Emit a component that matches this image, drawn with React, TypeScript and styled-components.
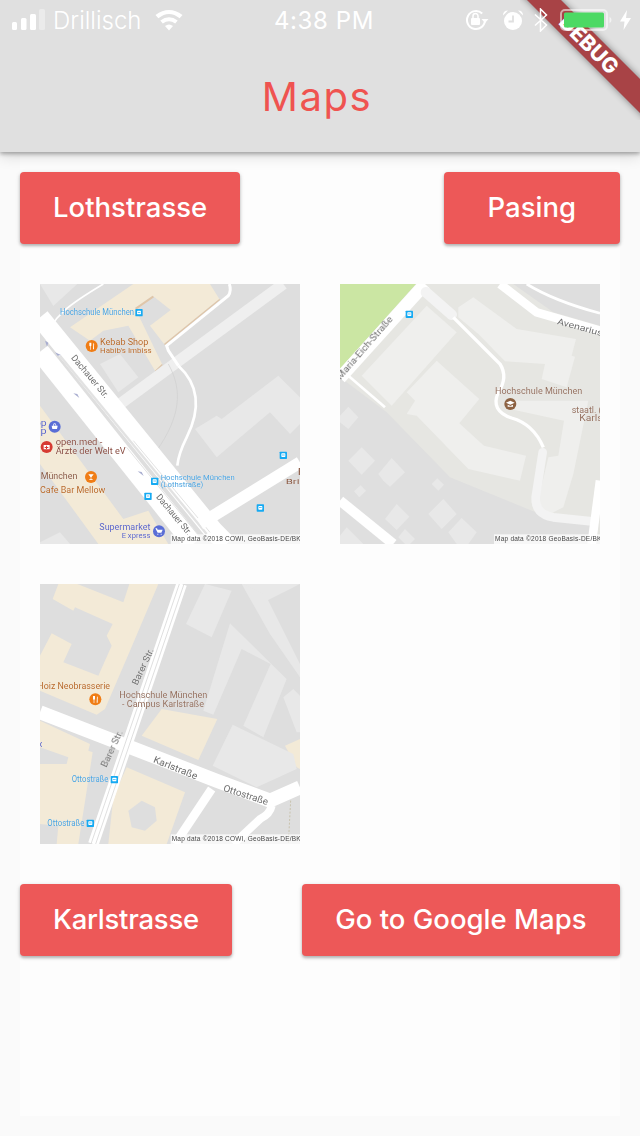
import React from "react";
import styled, { createGlobalStyle } from "styled-components";

const Global = createGlobalStyle`
  html, body { margin: 0; padding: 0; background: #fafafa; }
  body { font-family: Inter, "Noto Sans", sans-serif; }
  * { box-sizing: border-box; }
`;

const Page = styled.div`
  position: relative;
  width: 640px;
  height: 1136px;
  overflow: hidden;
  background: #fafafa;
  display: flex;
  flex-direction: column;
`;

const AppBar = styled.header`
  height: 152px;
  flex: none;
  background: #e0e0e0;
  box-shadow: 0 2px 4px rgba(0, 0, 0, 0.3), 0 4px 14px rgba(0, 0, 0, 0.14);
  display: flex;
  flex-direction: column;
  position: relative;
`;

const StatusBar = styled.div`
  height: 40px;
  display: grid;
  grid-template-columns: 1fr auto 1fr;
  align-items: center;
  color: #fff;
  position: relative;
  z-index: 4;
`;

const StatusLeft = styled.div`
  display: flex;
  align-items: center;
  padding-left: 12px;
`;

const Carrier = styled.span`
  font-size: 24px;
  font-weight: 300;
  margin-left: 8px;
`;

const Clock = styled.span`
  font-size: 24px;
  font-weight: 400;
  letter-spacing: 0.6px;
  margin-left: 8px;
`;

const StatusRight = styled.div`
  display: flex;
  align-items: center;
  justify-content: flex-end;
  padding-right: 9px;
`;

const Title = styled.h1`
  margin: 0;
  flex: 1;
  display: flex;
  align-items: center;
  justify-content: center;
  font-size: 40px;
  line-height: 48px;
  font-weight: 400;
  letter-spacing: 1.6px;
  color: #ef5350;
  padding-right: 6px;
  padding-top: 2px;
`;

const DebugCorner = styled.div`
  position: absolute;
  top: 0;
  right: 0;
  width: 120px;
  height: 120px;
  overflow: hidden;
  z-index: 3;
`;

const DebugBand = styled.div`
  position: absolute;
  left: -27px;
  top: 37px;
  width: 200px;
  height: 24px;
  padding-right: 12px;
  transform: rotate(45deg);
  background: #a84346;
  box-shadow: 0 0 7px rgba(0, 0, 0, 0.45);
  color: #fff;
  font-size: 21px;
  line-height: 24px;
  font-weight: 800;
  text-align: center;
  letter-spacing: 0.2px;
`;

const Content = styled.main`
  flex: none;
  margin: 0 20px;
  height: 964px;
  background: #fdfdfd;
  padding-top: 20px;
`;

const ButtonRow = styled.div`
  display: flex;
  justify-content: space-between;
`;

const ActionButton = styled.button<{ $pad?: number; $track?: number }>`
  height: 72px;
  padding: 0 ${(p) => p.$pad ?? 33}px 2px;
  border: none;
  border-radius: 4px;
  background: #ed5858;
  color: #fff;
  font-family: inherit;
  font-size: 27.5px;
  font-weight: 500;
  letter-spacing: ${(p) => p.$track ?? 0}px;
  box-shadow: 0 2px 3px rgba(0, 0, 0, 0.24), 0 1px 5px rgba(0, 0, 0, 0.12);
`;

const MapGrid = styled.div`
  display: grid;
  grid-template-columns: 300px 300px;
  grid-auto-rows: 300px;
  margin: 20px 0;
`;

const MapCell = styled.div`
  padding: 20px;
`;

const MapFrame = styled.svg`
  display: block;
  width: 260px;
  height: 260px;
`;

const F = "Roboto, Arial, sans-serif";
const BLUE = "#4aa3e0";
const BROWN = "#94705f";
const GREY = "#6f6f6f";
const ORANGE = "#f07d14";
const TAN = "#f3ead7";
const LIGHT = "#e8e8e8";

type LabelProps = {
  x: number;
  y: number;
  w: number;
  c: string;
  s?: number;
  r?: number;
  children: string;
};

const L = ({ x, y, w, c, s = 22, r, children }: LabelProps) => (
  <text
    x={x}
    y={y}
    fontFamily={F}
    fontSize={s * 1.14}
    fill={c}
    textLength={w}
    lengthAdjust="spacingAndGlyphs"
    transform={r ? `rotate(${r} ${x} ${y})` : undefined}
    stroke="#fff"
    strokeWidth={0.5}
    paintOrder="stroke"
  >
    {children}
  </text>
);

const Transit = ({ x, y }: { x: number; y: number }) => (
  <g>
    <rect x={x - 11} y={y - 11} width={22} height={22} rx={2} fill="#18aaf2" />
    <rect x={x - 6} y={y - 6} width={12} height={11} rx={2} fill="#fff" />
    <rect x={x - 4} y={y - 2} width={8} height={2} fill="#18aaf2" />
  </g>
);

const Pin = ({ x, y, c, kind }: { x: number; y: number; c: string; kind: "food" | "shop" | "med" | "edu" | "bar" | "cart" }) => (
  <g>
    <circle cx={x} cy={y} r={18} fill={c} />
    {kind === "food" && (
      <path d={`M${x - 7} ${y - 10}v8q0 3 2 3v10h2v-10q2 0 2-3v-8M${x + 5} ${y - 10}q4 4 2 10v10h-3z`} fill="#fff" />
    )}
    {kind === "bar" && <path d={`M${x - 8} ${y - 8}h16l-7 9v6h4v2h-10v-2h4v-6z`} fill="#fff" />}
    {kind === "shop" && <path d={`M${x - 9} ${y - 3}h18l-2 10h-14zM${x - 5} ${y - 3}q0-7 5-7t5 7h-2q0-5-3-5t-3 5z`} fill="#fff" />}
    {kind === "med" && <path d={`M${x - 9} ${y - 6}h18v13h-18zM${x - 2} ${y - 4}v4h-4v3h4v3h3v-3h4v-3h-4v-4z`} fill="#fff" fillRule="evenodd" />}
    {kind === "edu" && <path d={`M${x} ${y - 10}l13 6-13 6-13-6zM${x - 8} ${y + 2}l8 4 8-4v6h-16z`} fill="#fff" />}
    {kind === "cart" && <path d={`M${x - 11} ${y - 9}h5l2 4h15l-4 9h-11zM${x - 5} ${y + 7}h3v3h-3zM${x + 5} ${y + 7}h3v3h-3z`} fill="#fff" />}
  </g>
);

const Credit = ({ x, text }: { x: number; text: string }) => (
  <g>
    <rect x={x} y={751} width={780 - x} height={29} fill="#fff" fillOpacity={0.75} />
    <text x={x + 3} y={772} fontFamily="'Liberation Sans', Arial, sans-serif" fontSize={19.5} fill="#444" letterSpacing={0.7}>
      {text}
    </text>
  </g>
);

const Blur = ({ id }: { id: string }) => (
  <defs>
    <filter id={id} x="0" y="0" width="100%" height="100%">
      <feGaussianBlur stdDeviation="0.9" />
    </filter>
  </defs>
);

const LothMap = () => (
  <MapFrame viewBox="0 0 780 780">
    <Blur id="m1" />
    <g filter="url(#m1)">
      <rect width={780} height={780} fill="#dedede" />
      <polygon points="0,0 112,0 40,66" fill={LIGHT} />
      <path d="M90,130 L280,0 L510,0 L538,45 L372,180 L330,125 L392,78 L338,35 L285,72 L366,240 L345,260 L265,125 L190,140 L150,170Z" fill={TAN} />
      <path d="M285,72 L338,35 L342,40 L290,76Z M372,180 L538,45 L540,48 L375,183Z M345,260 L366,240 L368,243 L347,262Z" fill="#e0c6a8" />
      <polygon points="180,240 240,210 295,280 235,325" fill={LIGHT} />
      <polygon points="0,365 250,705 325,680 385,780 175,780 0,540" fill={TAN} />
      <polygon points="0,775 60,745 90,780 0,780" fill={LIGHT} />
      <polygon points="465,435 530,395 545,405 715,275 780,340 780,420 750,450 690,385 530,520" fill={LIGHT} />
      <path d="M240,360 L730,0" stroke="#efefef" strokeWidth={34} fill="none" />
      <path d="M415,245 L385,200 L380,185 L565,35 Q575,20 568,0" stroke="#fff" strokeWidth={9} fill="none" />
      <path d="M415,245 C475,300 485,370 440,460 Q415,510 412,545" stroke="#fff" strokeWidth={8} fill="none" />
      <path d="M20,170 C30,100 90,60 190,0" stroke="#fff" strokeWidth={5} fill="none" />
      <path d="M385,240 C430,320 420,400 350,500" stroke="#cfcfcf" strokeWidth={2} fill="none" />
      <path d="M0,100 L520,740 L560,780" stroke="#fff" strokeWidth={58} fill="none" />
      <path d="M0,203 L460,780" stroke="#fff" strokeWidth={58} fill="none" />
      <path d="M60,215 L500,750" stroke="#e2e2e2" strokeWidth={7} fill="none" />
      <path d="M280,470 L510,745 M260,490 L480,760" stroke="#c4c4c4" strokeWidth={1.5} fill="none" />
      <path d="M480,720 L780,535" stroke="#fff" strokeWidth={36} fill="none" />
      <path d="M100,328 l18,14 -6,-12 -12,-2z M293,562 l18,14 -6,-12 -12,-2z M45,205 l18,8 -10,2z M15,170 l6,18 4,-12z" fill="#a9aed0" />
      <L x={60} y={92} w={222} c={BLUE}>Hochschule München</L>
      <Transit x={297} y={86} />
      <Pin x={155} y={186} c={ORANGE} kind="food" />
      <L x={180} y={183} w={145} c="#b8692a" s={23}>Kebab Shop</L>
      <L x={180} y={206} w={155} c="#b8692a" s={20}>Habib's Imbiss</L>
      <L x={92} y={222} w={160} c={GREY} s={24} r={50}>Dachauer Str.</L>
      <L x={347} y={640} w={150} c={GREY} s={24} r={50}>Dachauer Str.</L>
      <L x={-15} y={425} w={35} c="#5a64c8" s={22}>pp</L>
      <L x={-15} y={449} w={35} c="#5a64c8" s={22}>sp</L>
      <Pin x={44} y={428} c="#5a6ed6" kind="shop" />
      <Pin x={20} y={489} c="#d63a32" kind="med" />
      <L x={47} y={484} w={140} c="#8a4f45" s={23}>open.med -</L>
      <L x={47} y={511} w={210} c="#8a4f45" s={23}>Ärzte der Welt eV</L>
      <L x={2} y={584} w={110} c="#8a5a45" s={23}>München</L>
      <Pin x={153} y={579} c={ORANGE} kind="bar" />
      <L x={0} y={626} w={196} c="#b8692a" s={23}>Cafe Bar Mellow</L>
      <L x={362} y={587} w={222} c={BLUE} s={20}>Hochschule München</L>
      <L x={362} y={610} w={128} c={BLUE} s={20}>(Lothstraße)</L>
      <Transit x={344} y={592} />
      <Transit x={324} y={637} />
      <Transit x={730} y={514} />
      <Transit x={661} y={672} />
      <L x={773} y={574} w={20} c="#8a5a45" s={22}>F</L>
      <L x={737} y={601} w={60} c="#8a5a45" s={20}>Brie</L>
      <L x={178} y={738} w={153} c="#5a64c8" s={24}>Supermarket</L>
      <L x={245} y={762} w={86} c="#5a64c8" s={21}>E xpress</L>
      <Pin x={357} y={742} c="#5a6ed6" kind="cart" />
      <Credit x={392} text="Map data ©2018 COWI, GeoBasis-DE/BKG" />
    </g>
  </MapFrame>
);

const PasingMap = () => (
  <MapFrame viewBox="0 0 780 780">
    <Blur id="m2" />
    <g filter="url(#m2)">
      <rect width={780} height={780} fill="#e6e6e2" />
      <polygon points="0,280 140,385 330,580 600,690 760,720 780,780 0,780" fill="#dfdfdf" />
      <polygon points="0,0 228,0 0,255" fill="#cbe6a3" />
      <polygon points="520,0 780,0 780,125 640,85" fill="#dedede" />
      <path d="M480,0 L590,85 L780,140" stroke="#fff" strokeWidth={26} fill="none" />
      <path d="M560,0 Q640,50 780,88" stroke="#fff" strokeWidth={8} fill="none" />
      <path d="M255,0 L0,282" stroke="#fff" strokeWidth={38} fill="none" />
      <path d="M25,275 L135,370" stroke="#fff" strokeWidth={8} fill="none" />
      <polygon points="65,275 260,65 350,145 155,365" fill="#efefed" />
      <polygon points="200,325 290,230 418,345 358,418 432,485 558,515 540,590 385,555 230,395 200,390 225,350" fill="#efefed" />
      <polygon points="355,70 400,40 530,135 708,165 695,215 705,218 680,310 605,285 615,240 495,232 415,150 355,100" fill="#efefed" />
      <polygon points="510,350 745,350 700,570 670,670 630,690 592,660 625,520 655,515 672,410 510,375" fill="#efefed" />
      <path d="M258,25 L335,92" stroke="#f3f3f3" strokeWidth={32} strokeLinecap="round" fill="none" />
      <path d="M340,100 L480,240 Q505,280 475,325 Q450,380 515,402 Q580,420 610,490" stroke="#fff" strokeWidth={10} fill="none" />
      <path d="M608,505 L587,640 Q585,690 640,700 L755,712" stroke="#f3f3f3" strokeWidth={26} strokeLinecap="round" fill="none" />
      <path d="M780,590 L755,780" stroke="#fff" strokeWidth={26} fill="none" />
      <path d="M0,650 L160,780" stroke="#fff" strokeWidth={30} fill="none" />
      {[
        "0,395 25,368 55,400 25,435 0,415",
        "25,530 65,490 105,530 65,572",
        "115,570 155,522 195,565 150,608 130,590",
        "42,622 62,604 78,620 58,640",
        "275,600 292,583 312,602 295,620",
        "135,705 170,660 208,698 170,738",
        "265,690 310,645 350,690 305,735",
        "325,745 365,702 410,745 385,780 350,780",
        "175,760 195,735 225,765 210,780 195,780",
        "0,755 20,730 70,780 0,780",
      ].map((p) => (
        <polygon key={p} points={p} fill={LIGHT} />
      ))}
      <L x={2} y={288} w={240} c={GREY} s={25} r={-49}>Maria-Eich-Straße</L>
      <Transit x={208} y={91} />
      <L x={650} y={120} w={140} c={GREY} s={23} r={15}>Avenarius</L>
      <L x={465} y={330} w={262} c={BROWN} s={22}>Hochschule München</L>
      <Pin x={511} y={360} c="#8d6242" kind="edu" />
      <L x={695} y={386} w={90} c={BROWN} s={22}>staatl. (</L>
      <L x={718} y={412} w={70} c={BROWN} s={22}>Karls</L>
      <Credit x={462} text="Map data ©2018 GeoBasis-DE/BKG" />
    </g>
  </MapFrame>
);

const KarlMap = () => (
  <MapFrame viewBox="0 0 780 780">
    <Blur id="m3" />
    <g filter="url(#m3)">
      <rect width={780} height={780} fill="#dedede" />
      <polygon points="38,45 55,0 355,0 268,205 195,375 170,392 0,320 0,215 35,148 95,180 70,235 175,275 215,185 200,155 218,120 105,70 100,80" fill={TAN} />
      <polygon points="112,0 250,55 268,0" fill="#dedede" />
      <polygon points="305,455 365,375 532,405 475,528" fill={TAN} />
      <polygon points="0,410 150,480 145,500 158,505 115,780 50,780 55,725 0,720 0,540 80,540 85,520 0,490" fill={TAN} />
      <polygon points="260,550 435,625 380,780 205,780 220,640" fill={TAN} />
      <polygon points="265,680 305,650 345,670 350,710 315,740 275,730" fill="#dedede" />
      <polygon points="735,485 780,465 780,555 770,550" fill={TAN} />
      <polygon points="438,120 495,0 575,20 515,160" fill={LIGHT} />
      <polygon points="490,380 570,118 740,285 670,460 610,425 692,240 605,195 520,392" fill={LIGHT} />
      <polygon points="518,545 578,422 760,510 770,555 650,610" fill={LIGHT} />
      <polygon points="605,0 660,0 780,240 780,280 690,150" fill={LIGHT} />
      <polygon points="610,0 780,0 680,50 670,30" fill={LIGHT} />
      <polygon points="730,340 760,315 780,335 780,445 770,445" fill={LIGHT} />
      <path d="M0,385 L530,590 L690,650 L780,610" stroke="#fff" strokeWidth={42} fill="none" strokeLinejoin="round" />
      <path d="M425,0 L160,780" stroke="#fff" strokeWidth={32} fill="none" />
      <path d="M418,0 L153,780 M432,0 L167,780" stroke="#cfcfcf" strokeWidth={2} fill="none" />
      <path d="M515,615 L405,780" stroke="#fff" strokeWidth={26} fill="none" />
      <path d="M695,665 Q690,690 660,705 L580,780" stroke="#fff" strokeWidth={24} fill="none" />
      <path d="M752,650 L745,780" stroke="#bdb494" strokeWidth={2} strokeDasharray="6 5" fill="none" />
      <L x={292} y={305} w={118} c={GREY} s={24} r={-65}>Barer Str.</L>
      <L x={200} y={552} w={118} c={GREY} s={24} r={-65}>Barer Str.</L>
      <L x={-8} y={316} w={218} c="#b8692a" s={23}>Hoiz Neobrasserie</L>
      <Pin x={166} y={346} c={ORANGE} kind="food" />
      <L x={238} y={342} w={264} c={BROWN} s={22}>Hochschule München</L>
      <L x={246} y={370} w={246} c={BROWN} s={22}>- Campus Karlstraße</L>
      <L x={338} y={534} w={140} c={GREY} s={25} r={22}>Karlstraße</L>
      <L x={548} y={620} w={140} c={GREY} s={25} r={18}>Ottostraße</L>
      <L x={-5} y={490} w={12} c="#5a64c8" s={22}>x</L>
      <L x={95} y={595} w={110} c={BLUE}>Ottostraße</L>
      <Transit x={223} y={587} />
      <L x={22} y={726} w={111} c={BLUE}>Ottostraße</L>
      <Transit x={151} y={718} />
      <Credit x={392} text="Map data ©2018 COWI, GeoBasis-DE/BKG" />
    </g>
  </MapFrame>
);

const SignalIcon = () => (
  <svg width="33" height="22" viewBox="0 0 33 22">
    <rect x="0" y="13" width="5" height="8" rx="1.5" fill="#fff" />
    <rect x="9" y="9" width="5.5" height="12" rx="1.5" fill="#fff" />
    <rect x="18" y="5" width="6" height="16" rx="1.5" fill="#fff" />
    <rect x="27" y="0" width="6" height="21" rx="1.5" fill="#fff" fillOpacity="0.35" />
  </svg>
);

const WifiIcon = () => (
  <svg width="28" height="21" viewBox="0 0 28 21" style={{ marginLeft: 14 }}>
    <path d="M14 20.5l-4-4.6q4-3 8 0zM7.8 13.4l-2.5-2.9q8.700-6.500 17.400 0l-2.5 2.9q-6.200-4.500-12.400 0zM3.400 8.300L.5 5.100q13.500-10 27 0l-2.900 3.200Q14-.2 3.400 8.300z" fill="#fff" />
  </svg>
);

const RotationIcon = () => (
  <svg width="24" height="22" viewBox="0 0 24 22">
    <path d="M20 11a9 9 0 1 1-2.800-6.500" fill="none" stroke="#fff" strokeWidth="2" />
    <path d="M16.500 10h7l-3.500 4z" fill="#fff" />
    <rect x="6" y="9" width="9" height="7" rx="1" fill="#fff" />
    <path d="M8 9V7a2.500 2.500 0 0 1 5 0v2" fill="none" stroke="#fff" strokeWidth="1.500" />
  </svg>
);

const AlarmIcon = () => (
  <svg width="22" height="22" viewBox="0 0 22 22" style={{ marginLeft: 13 }}>
    <circle cx="11" cy="12" r="9" fill="#fff" />
    <path d="M11 6.500V12.500H6.500" fill="none" stroke="#e0e0e0" strokeWidth="1.800" />
    <path d="M1 6.500Q1 1.500 6 1.500zM21 6.500Q21 1.500 16 1.500z" fill="#fff" />
  </svg>
);

const BluetoothIcon = () => (
  <svg width="14" height="24" viewBox="0 0 14 24" style={{ marginLeft: 10 }}>
    <path d="M1 6.500L12.500 17 6.500 23V1L12.500 7 1 17.500" fill="none" stroke="#fff" strokeWidth="1.500" />
  </svg>
);

const BatteryIcon = () => (
  <svg width="53" height="22" viewBox="0 0 53 22" style={{ marginLeft: 12 }}>
    <rect x="1" y="1" width="46" height="20" rx="4" fill="none" stroke="#fff" strokeOpacity="0.55" strokeWidth="2" />
    <rect x="4" y="3.500" width="40" height="15" rx="1.500" fill="#4cd964" />
    <path d="M49.500 8q2 .5 2 3t-2 3z" fill="#fff" fillOpacity="0.6" />
  </svg>
);

const BoltIcon = () => (
  <svg width="11" height="20" viewBox="0 0 11 20" style={{ marginLeft: 7 }}>
    <path d="M7 0L0 11.500H4.500L3.500 20 11 8H6z" fill="#fff" />
  </svg>
);

export default function App() {
  return (
    <Page>
      <Global />
      <AppBar>
        <StatusBar>
          <StatusLeft>
            <SignalIcon />
            <Carrier>Drillisch</Carrier>
            <WifiIcon />
          </StatusLeft>
          <Clock>4:38 PM</Clock>
          <StatusRight>
            <RotationIcon />
            <AlarmIcon />
            <BluetoothIcon />
            <BatteryIcon />
            <BoltIcon />
          </StatusRight>
        </StatusBar>
        <Title>Maps</Title>
      </AppBar>
      <DebugCorner>
        <DebugBand>DEBUG</DebugBand>
      </DebugCorner>
      <Content>
        <ButtonRow>
          <ActionButton>Lothstrasse</ActionButton>
          <ActionButton $pad={44}>Pasing</ActionButton>
        </ButtonRow>
        <MapGrid>
          <MapCell><LothMap /></MapCell>
          <MapCell><PasingMap /></MapCell>
          <MapCell><KarlMap /></MapCell>
        </MapGrid>
        <ButtonRow>
          <ActionButton $track={-0.25}>Karlstrasse</ActionButton>
          <ActionButton $pad={33.5}>Go to Google Maps</ActionButton>
        </ButtonRow>
      </Content>
    </Page>
  );
}
